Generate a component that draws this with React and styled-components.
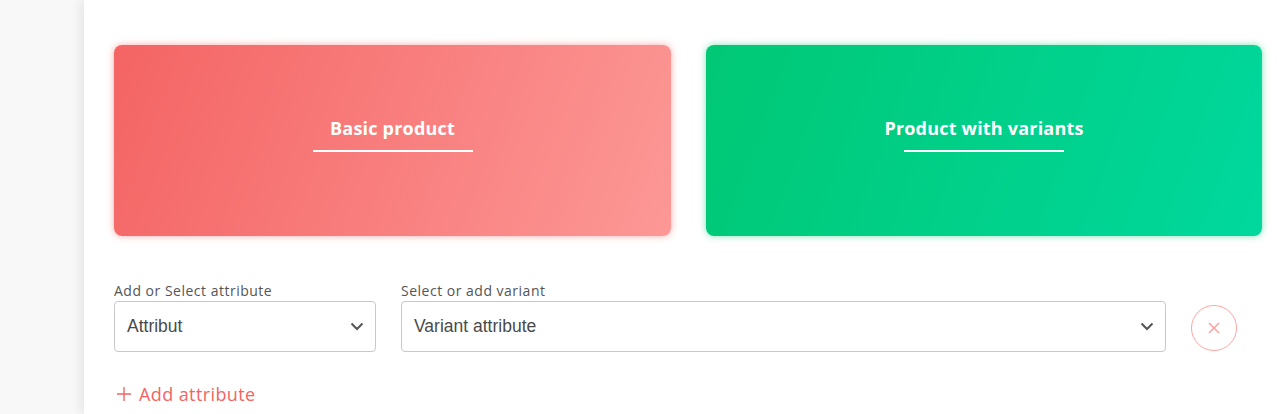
import React from "react";
import styled, { createGlobalStyle } from "styled-components";

const Global = createGlobalStyle`
  html, body {
    margin: 0;
    padding: 0;
    background: #f8f8f8;
    font-family: "Open Sans", "Liberation Sans", sans-serif;
  }
`;

const Layout = styled.div`
  display: flex;
  height: 414px;
  overflow: hidden;
`;

const Side = styled.div`
  width: 84px;
  flex-shrink: 0;
  background: #f8f8f8;
`;

const Main = styled.div`
  flex: 1;
  background: #fff;
  box-shadow: -4px 0 10px rgba(0, 0, 0, 0.07);
  padding: 45px 23px 0 30px;
`;

const Cards = styled.div`
  display: grid;
  grid-template-columns: 557px 556px;
  gap: 35px;
`;

const Card = styled.div`
  height: 191px;
  border-radius: 8px;
  display: flex;
  flex-direction: column;
  align-items: center;
  justify-content: center;
  background: ${(p) => p.$bg};
  box-shadow: 0 0 7px ${(p) => p.$glow};
`;

const CardTitle = styled.div`
  color: #fff;
  font-family: "Open Sans", sans-serif;
  font-weight: 700;
  font-size: 18px;
  letter-spacing: 0.2px;
  margin-top: -4px;
  padding-bottom: 9px;
  text-align: center;
  &::after {
    content: "";
    display: block;
    width: 160px;
    height: 2px;
    margin: 10px auto 0;
    background: #fff;
  }
`;

const Row = styled.div`
  display: flex;
  align-items: flex-end;
  gap: 25px;
  margin-top: 45px;
`;

const Field = styled.div`
  display: flex;
  flex-direction: column;
  width: ${(p) => p.$w}px;
`;

const Label = styled.label`
  font-family: "Open Sans", sans-serif;
  font-size: 14px;
  color: #555;
  margin-bottom: 1px;
  letter-spacing: 0.5px;
`;

const Select = styled.div`
  height: 51px;
  box-sizing: border-box;
  border: 1px solid #c8c8c8;
  border-radius: 4px;
  display: flex;
  align-items: center;
  justify-content: space-between;
  padding: 0 11px 0 12px;
  font-family: "Liberation Sans", Arial, sans-serif;
  font-size: 17.5px;
  color: #4a4a4a;
`;

const RemoveBtn = styled.button`
  all: unset;
  width: 46px;
  height: 46px;
  box-sizing: border-box;
  border: 1px solid #fca5a3;
  border-radius: 50%;
  display: flex;
  align-items: center;
  justify-content: center;
  margin-bottom: 1px;
`;

const AddLink = styled.div`
  margin-top: 30px;
  margin-left: 3px;
  font-family: "Open Sans", sans-serif;
  font-size: 18px;
  letter-spacing: 0.4px;
  color: #f46464;
  display: flex;
  align-items: center;
  gap: 8px;
`;

const Chevron = () => (
  <svg width="14" height="9" viewBox="0 0 14 9">
    <path d="M1.5 1.5 L7 7 L12.5 1.5" fill="none" stroke="#555" strokeWidth="2" />
  </svg>
);

const App = () => (
  <Layout>
    <Global />
    <Side />
    <Main>
      <Cards>
        <Card
          $bg="linear-gradient(110deg, #f46464 0%, #fc9896 100%)"
          $glow="rgba(246, 100, 100, 0.55)"
        >
          <CardTitle>Basic product</CardTitle>
        </Card>
        <Card
          $bg="linear-gradient(110deg, #00c875 0%, #00d89d 100%)"
          $glow="rgba(0, 200, 120, 0.5)"
        >
          <CardTitle>Product with variants</CardTitle>
        </Card>
      </Cards>
      <Row>
        <Field $w={262}>
          <Label>Add or Select attribute</Label>
          <Select>
            Attribut
            <Chevron />
          </Select>
        </Field>
        <Field $w={765}>
          <Label>Select or add variant</Label>
          <Select>
            Variant attribute
            <Chevron />
          </Select>
        </Field>
        <RemoveBtn>
          <svg width="12" height="12" viewBox="0 0 12 12">
            <path d="M1 1 L11 11 M11 1 L1 11" stroke="#fc9a98" strokeWidth="1.4" />
          </svg>
        </RemoveBtn>
      </Row>
      <AddLink>
        <svg width="14" height="14" viewBox="0 0 14 14">
          <path d="M7 0 V14 M0 7 H14" stroke="#f46464" strokeWidth="1.4" />
        </svg>
        Add attribute
      </AddLink>
    </Main>
  </Layout>
);

export default App;
